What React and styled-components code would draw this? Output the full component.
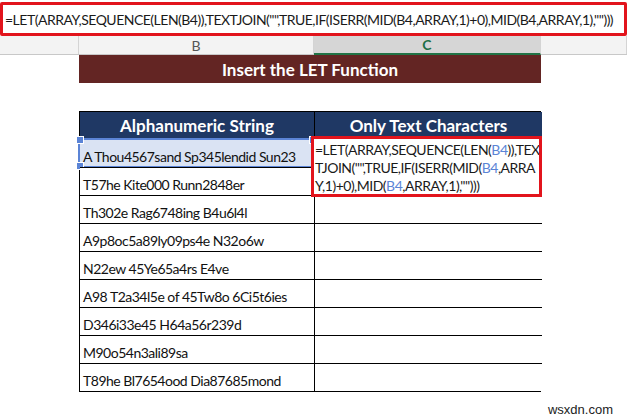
import React from 'react';
import styled, { createGlobalStyle } from 'styled-components';

const GlobalStyle = createGlobalStyle`
  html, body {
    margin: 0;
    padding: 0;
    background: #ffffff;
  }
  body {
    width: 627px;
    height: 420px;
    overflow: hidden;
    font-family: Lato, "Open Sans", sans-serif;
  }
`;

const Page = styled.div`
  position: relative;
  width: 627px;
  height: 420px;
  padding-top: 2px;
  box-sizing: border-box;
`;

const FormulaBar = styled.div`
  height: 34px;
  box-sizing: border-box;
  border: 3px solid #e2141c;
  border-radius: 2px;
  display: flex;
  align-items: center;
  padding-left: 2px;
  font-size: 14px;
  letter-spacing: -0.5px;
  color: #1a1a1a;
  white-space: nowrap;
  overflow: hidden;
`;

const ColumnStrip = styled.div`
  display: flex;
  height: 19px;
  background: #f3f3f3;
  border-bottom: 1px solid #c8c8c8;
  box-sizing: border-box;
`;

const ColumnHead = styled.div`
  width: ${({ w }) => w}px;
  flex: ${({ grow }) => (grow ? 1 : 'none')};
  display: flex;
  align-items: center;
  justify-content: center;
  box-sizing: border-box;
  border-right: 1px solid #d4d4d4;
  font-size: 14px;
  background: ${({ active }) => (active ? '#d6d6d6' : 'transparent')};
  color: ${({ active }) => (active ? '#1e6f45' : '#555')};
  font-weight: ${({ active }) => (active ? 700 : 400)};
  border-bottom: ${({ active }) => (active ? '2px solid #217346' : 'none')};
  margin-bottom: ${({ active }) => (active ? '-1px' : '0')};
`;

const Sheet = styled.div`
  padding-left: 79px;
  display: flex;
  flex-direction: column;
`;

const TitleBar = styled.div`
  width: 462px;
  height: 28px;
  background: #632523;
  color: #ffffff;
  font-weight: 700;
  font-size: 17px;
  display: flex;
  align-items: center;
  justify-content: center;
`;

const Table = styled.div`
  position: relative;
  margin-top: 28px;
  width: 462px;
  display: grid;
  grid-template-columns: 234px 228px;
  border: 1px solid #000;
  box-sizing: border-box;
`;

const HeadCell = styled.div`
  height: 26px;
  background: #1f3864;
  color: #ffffff;
  font-weight: 700;
  font-size: 17px;
  display: flex;
  align-items: center;
  justify-content: center;
  border-left: ${({ first }) => (first ? 'none' : '1px solid #000')};
`;

const Cell = styled.div`
  height: ${({ tall }) => (tall ? 29 : 28)}px;
  box-sizing: border-box;
  border-top: 1px solid #000;
  border-left: ${({ first }) => (first ? 'none' : '1px solid #000')};
  display: flex;
  align-items: flex-end;
  padding: 0 0 2px 3px;
  font-size: 14px;
  letter-spacing: -0.5px;
  color: #111;
  white-space: nowrap;
  background: ${({ selected }) => (selected ? '#dae3f3' : '#fff')};
  position: relative;
`;

const Selection = styled.div`
  position: absolute;
  inset: -1px -1px -1px -2px;
  border: 2px solid #5b84d6;
  pointer-events: none;
`;

const Handle = styled.span`
  position: absolute;
  width: 6px;
  height: 6px;
  background: #5b84d6;
  border: 1px solid #fff;
  left: ${({ right }) => (right ? 'auto' : '-4px')};
  right: ${({ right }) => (right ? '-4px' : 'auto')};
  top: ${({ bottom }) => (bottom ? 'auto' : '-4px')};
  bottom: ${({ bottom }) => (bottom ? '-4px' : 'auto')};
`;

const EditBox = styled.div`
  position: absolute;
  left: 231px;
  top: 24px;
  width: 231px;
  height: 61px;
  box-sizing: border-box;
  border: 3px solid #e2141c;
  background: #fff;
  padding: 2px 0 0 1px;
  font-size: 14px;
  letter-spacing: -0.5px;
  line-height: 18px;
  color: #1a1a1a;
  display: flex;
  flex-direction: column;
  overflow: hidden;
`;

const EditLine = styled.div`
  white-space: nowrap;
`;

const Ref = styled.span`
  color: #5b84d6;
`;

const Watermark = styled.div`
  position: absolute;
  right: 14px;
  bottom: 3px;
  font-family: "Liberation Sans", Arial, sans-serif;
  font-size: 13px;
  color: #222;
`;

const rows = [
  'A Thou4567sand Sp345lendid Sun23',
  'T57he Kite000 Runn2848er',
  'Th302e Rag6748ing B4u6l4l',
  'A9p8oc5a89ly09ps4e N32o6w',
  'N22ew 45Ye65a4rs E4ve',
  'A98 T2a34l5e of 45Tw8o 6Ci5t6ies',
  'D346i33e45 H64a56r239d',
  'M90o54n3ali89sa',
  'T89he Bl7654ood Dia87685mond',
];

const App = () => {
  return (
    <Page>
      <GlobalStyle />
      <FormulaBar>
        =LET(ARRAY,SEQUENCE(LEN(B4)),TEXTJOIN("",TRUE,IF(ISERR(MID(B4,ARRAY,1)+0),MID(B4,ARRAY,1),"")))
      </FormulaBar>
      <ColumnStrip>
        <ColumnHead w={79} />
        <ColumnHead w={235}>B</ColumnHead>
        <ColumnHead w={227} active>
          C
        </ColumnHead>
        <ColumnHead grow />
      </ColumnStrip>
      <Sheet>
        <TitleBar>Insert the LET Function</TitleBar>
        <Table>
          <HeadCell first>Alphanumeric String</HeadCell>
          <HeadCell>Only Text Characters</HeadCell>
          {rows.map((text, index) => (
            <React.Fragment key={index}>
              <Cell first selected={index === 0} tall={index === 0}>
                {text}
                {index === 0 && (
                  <Selection>
                    <Handle />
                    <Handle bottom />
                    <Handle right />
                  </Selection>
                )}
              </Cell>
              <Cell tall={index === 0} />
            </React.Fragment>
          ))}
          <EditBox>
            <EditLine>
              =LET(ARRAY,SEQUENCE(LEN(<Ref>B4</Ref>)),TEX
            </EditLine>
            <EditLine>
              TJOIN("",TRUE,IF(ISERR(MID(<Ref>B4</Ref>,ARRA
            </EditLine>
            <EditLine>
              Y,1)+0),MID(<Ref>B4</Ref>,ARRAY,1),"")))
            </EditLine>
          </EditBox>
        </Table>
      </Sheet>
      <Watermark>wsxdn.com</Watermark>
    </Page>
  );
};

export default App;
